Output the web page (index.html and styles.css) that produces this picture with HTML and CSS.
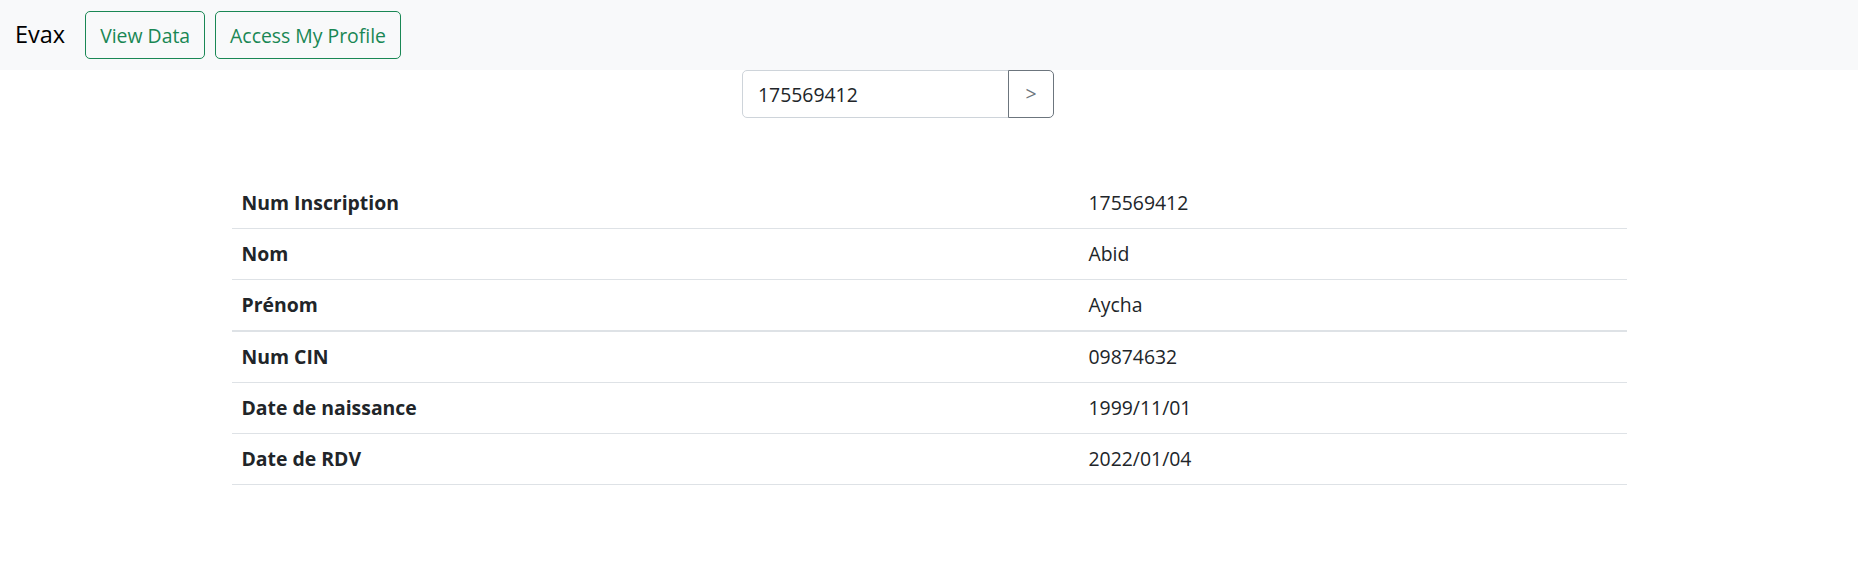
FILE: index.html
```html
<!DOCTYPE html>
<html lang="fr">
<head>
<meta charset="utf-8">
<title>Evax</title>
<link rel="stylesheet" href="styles.css">
</head>
<body>
<nav class="navbar">
  <span class="brand">Evax</span>
  <a class="btn btn-success-outline btn-gap" href="#">View Data</a>
  <a class="btn btn-success-outline" href="#">Access My Profile</a>
</nav>
<main class="main">
  <form class="search">
    <div class="input-group">
      <input class="search-input" type="text" value="175569412">
      <button class="search-btn" type="button">&gt;</button>
    </div>
  </form>
  <table class="data-table">
    <tbody>
      <tr><th>Num Inscription</th><td>175569412</td></tr>
      <tr><th>Nom</th><td>Abid</td></tr>
      <tr><th>Prénom</th><td>Aycha</td></tr>
    </tbody>
    <tbody class="group2">
      <tr><th>Num CIN</th><td>09874632</td></tr>
      <tr><th>Date de naissance</th><td>1999/11/01</td></tr>
      <tr><th>Date de RDV</th><td>2022/01/04</td></tr>
    </tbody>
  </table>
</main>
</body>
</html>
```
FILE: styles.css
```css
* { box-sizing: border-box; }
body {
  margin: 0;
  font-family: "Segoe UI", "Open Sans", "Noto Sans", "Liberation Sans", sans-serif;
  font-size: 19.4px;
  line-height: 1.5;
  color: #212529;
  background: #fff;
}
.navbar {
  display: flex;
  align-items: center;
  height: 70px;
  padding: 0 15px;
  background: #f8f9fa;
}
.brand {
  font-size: 23.5px;
  line-height: 37.5px;
  margin-right: 20px;
  color: #000;
}
.btn {
  display: inline-block;
  height: 48px;
  padding: 7.5px 14px;
  border: 1px solid #198754;
  border-radius: 5px;
  font-size: 19.4px;
  line-height: 31px;
  text-decoration: none;
  color: #198754;
}
.btn-gap { margin-right: 10px; }
.search {
  display: flex;
  padding-left: 742px;
}
.input-group {
  display: flex;
  height: 48px;
}
.search-input {
  width: 267px;
  height: 48px;
  padding: 7.5px 15px;
  border: 1px solid #ced4da;
  border-radius: 5px 0 0 5px;
  font: inherit;
  color: #212529;
  outline: none;
}
.search-btn {
  width: 46px;
  height: 48px;
  margin-left: -1px;
  border: 1px solid #6c757d;
  border-radius: 0 5px 5px 0;
  background: #fff;
  font: inherit;
  color: #6c757d;
  padding: 0;
}
.data-table {
  width: 1395px;
  margin: 60px auto 0;
  border-collapse: collapse;
}
.data-table th,
.data-table td {
  padding: 10px;
  text-align: left;
  border-bottom: 1px solid #dee2e6;
  line-height: 30px;
}
.data-table th {
  width: 847px;
  font-weight: 700;
}
.data-table td { font-weight: 400; }
.group2 tr:first-child th,
.group2 tr:first-child td {
  border-top: 2px solid #dee2e6;
}
```
